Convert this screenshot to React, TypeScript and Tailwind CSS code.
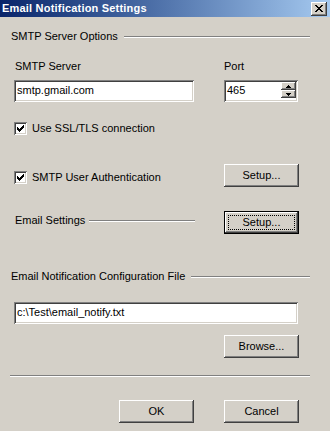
import React from "react";

const raised =
  "shadow-[inset_-1px_-1px_0_#404040,inset_1px_1px_0_#ffffff,inset_-2px_-2px_0_#808080,inset_2px_2px_0_#d4d0c8]";
const sunken =
  "shadow-[inset_1px_1px_0_#808080,inset_-1px_-1px_0_#ffffff,inset_2px_2px_0_#404040,inset_-2px_-2px_0_#d4d0c8]";

// tiny pixel bitmaps drawn as svg rects
function Pixels({ rows, className }: { rows: string[]; className?: string }) {
  const w = rows[0].length;
  const h = rows.length;
  return (
    <svg width={w} height={h} viewBox={`0 0 ${w} ${h}`} shapeRendering="crispEdges" className={className}>
      {rows.flatMap((r, y) =>
        r.split("").map((c, x) => (c === "X" ? <rect key={`${x}-${y}`} x={x} y={y} width={1} height={1} fill="#000" /> : null))
      )}
    </svg>
  );
}

const CLOSE = ["XX....XX", ".XX..XX.", "..XXXX..", "...XX...", "..XXXX..", ".XX..XX.", "XX....XX"];
const CHECK = ["......X", ".....XX", "X...XXX", "XX.XXX.", "XXXXX..", ".XXX...", "..X...."];
const UP = ["..X..", ".XXX.", "XXXXX"];
const DOWN = ["XXXXX", ".XXX.", "..X.."];

function Button({ label, isDefault }: { label: string; isDefault?: boolean }) {
  if (isDefault) {
    return (
      <div className={`w-[75px] h-[23px] border border-black bg-[#d4d0c8] flex p-[3px] ${raised}`}>
        <span className="flex-1 border border-dotted border-black flex items-center justify-center">{label}</span>
      </div>
    );
  }
  return (
    <div className={`w-[75px] h-[23px] bg-[#d4d0c8] flex items-center justify-center ${raised}`}>{label}</div>
  );
}

function Checkbox({ label }: { label: string }) {
  return (
    <div className="flex items-center h-[13px]">
      <div className={`w-[13px] h-[13px] bg-white flex items-start justify-start pl-[3px] pt-[3px] ${sunken}`}>
        <Pixels rows={CHECK} />
      </div>
      <span className="ml-[5px] leading-[13px]">{label}</span>
    </div>
  );
}

function GroupLine({ className }: { className?: string }) {
  return <div className={`h-[2px] border-t border-t-[#808080] border-b border-b-white ${className ?? ""}`} />;
}

export default function App() {
  return (
    <main className="w-[330px] h-[431px] bg-[#d4d0c8] text-black text-[11px] leading-[13px] font-['Liberation_Sans',Arial,sans-serif] overflow-hidden">
      {/* title bar */}
      <div className="h-[17px] flex items-center justify-between pl-[2px] pr-[3px] bg-gradient-to-r from-[#0a246a] to-[#a6caf0]">
        <span className="text-white font-bold text-[11px] leading-[13px] tracking-[0.2px]">Email Notification Settings</span>
        <div className={`w-[16px] h-[14px] bg-[#d4d0c8] flex items-center justify-center ${raised}`}>
          <Pixels rows={CLOSE} className="mt-[-1px]" />
        </div>
      </div>

      <div className="pl-[10px] pr-[20px]">
        {/* SMTP server options */}
        <div className="mt-[13px] flex items-center h-[13px] pl-[1px]">
          <span>SMTP Server Options</span>
          <GroupLine className="flex-1 ml-[6px] mt-[1px]" />
        </div>

        <div className="pl-[4px] pr-[11px]">
          <div className="mt-[17px] flex">
            <span className="w-[210px] pl-[1px]">SMTP Server</span>
            <span>Port</span>
          </div>

          <div className="mt-[7px] flex">
            <div className={`w-[180px] h-[22px] bg-white pl-[3px] pt-[3px] leading-[14px] ${sunken}`}>smtp.gmail.com</div>
            <div className={`ml-[30px] w-[74px] h-[22px] bg-white flex pl-[3px] pt-[2px] pr-[2px] ${sunken}`}>
              <span className="flex-1 pt-[1px] leading-[14px]">465</span>
              <div className="flex flex-col w-[15px]">
                <div className={`h-[8px] bg-[#d4d0c8] flex items-center justify-center ${raised}`}>
                  <Pixels rows={UP} />
                </div>
                <div className={`h-[8px] bg-[#d4d0c8] flex items-center justify-center ${raised}`}>
                  <Pixels rows={DOWN} />
                </div>
              </div>
            </div>
          </div>

          <div className="mt-[20px]">
            <Checkbox label="Use SSL/TLS connection" />
          </div>

          <div className="mt-[29px] flex justify-between items-start">
            <div className="mt-[7px]">
              <Checkbox label="SMTP User Authentication" />
            </div>
            <Button label="Setup..." />
          </div>

          <div className="mt-[24px] flex justify-between items-start">
            <div className="mt-[3px] flex items-center h-[13px] w-[181px] pl-[1px]">
              <span>Email Settings</span>
              <GroupLine className="flex-1 ml-[4px] mt-[1px]" />
            </div>
            <Button label="Setup..." isDefault />
          </div>
        </div>

        {/* configuration file */}
        <div className="mt-[36px] flex items-center h-[13px] pl-[1px]">
          <span>Email Notification Configuration File</span>
          <GroupLine className="flex-1 ml-[6px] mt-[1px]" />
        </div>

        <div className="pl-[4px] pr-[11px]">
          <div className={`mt-[19px] w-[284px] h-[22px] bg-white pl-[3px] pt-[3px] leading-[14px] ${sunken}`}>
            c:\Test\email_notify.txt
          </div>
          <div className="mt-[11px] flex justify-end">
            <Button label="Browse..." />
          </div>
        </div>

        <GroupLine className="mt-[17px]" />

        <div className="mt-[23px] flex justify-end gap-[30px] pr-[11px]">
          <Button label="OK" />
          <Button label="Cancel" />
        </div>
      </div>
    </main>
  );
}
